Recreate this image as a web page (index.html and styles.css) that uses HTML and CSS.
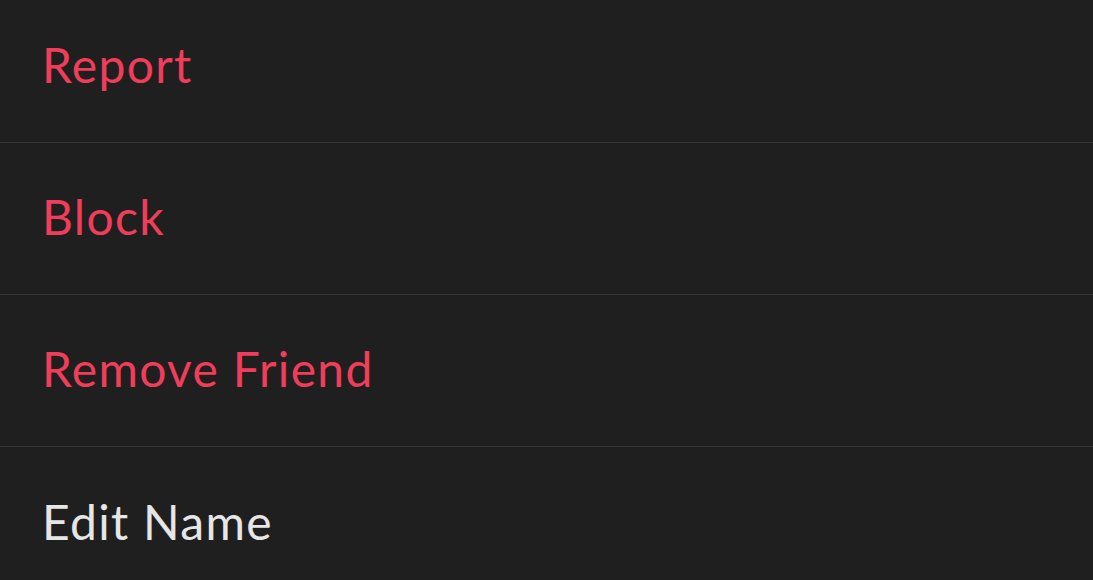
FILE: index.html
```html
<!DOCTYPE html>
<html lang="en">
<head>
    <meta charset="UTF-8">
    <meta name="viewport" content="width=device-width, initial-scale=1.0">
    <title>Friend Actions</title>
    <link rel="stylesheet" href="styles.css">
</head>
<body>
    <ul class="action-list">
        <li class="action danger">Report</li>
        <li class="action danger">Block</li>
        <li class="action danger">Remove Friend</li>
        <li class="action">Edit Name</li>
    </ul>
</body>
</html>
```

FILE: styles.css
```css
body {
    margin: 0;
    padding: 0;
    background-color: #1f1f1f;
    font-family: Lato, "Noto Sans", sans-serif;
    height: 100vh;
    overflow: hidden;
}
.action-list {
    list-style: none;
    margin: -9px 0 0 0;
    padding: 0;
}
.action {
    display: flex;
    align-items: center;
    height: 152px;
    padding: 0 0 4px 42px;
    box-sizing: border-box;
    border-bottom: 1px solid #343434;
    font-size: 48px;
    letter-spacing: 1.3px;
    color: #e6e6e6;
}
.action.danger {
    color: #f03d5a;
}
.action:last-child {
    border-bottom: none;
}
```
